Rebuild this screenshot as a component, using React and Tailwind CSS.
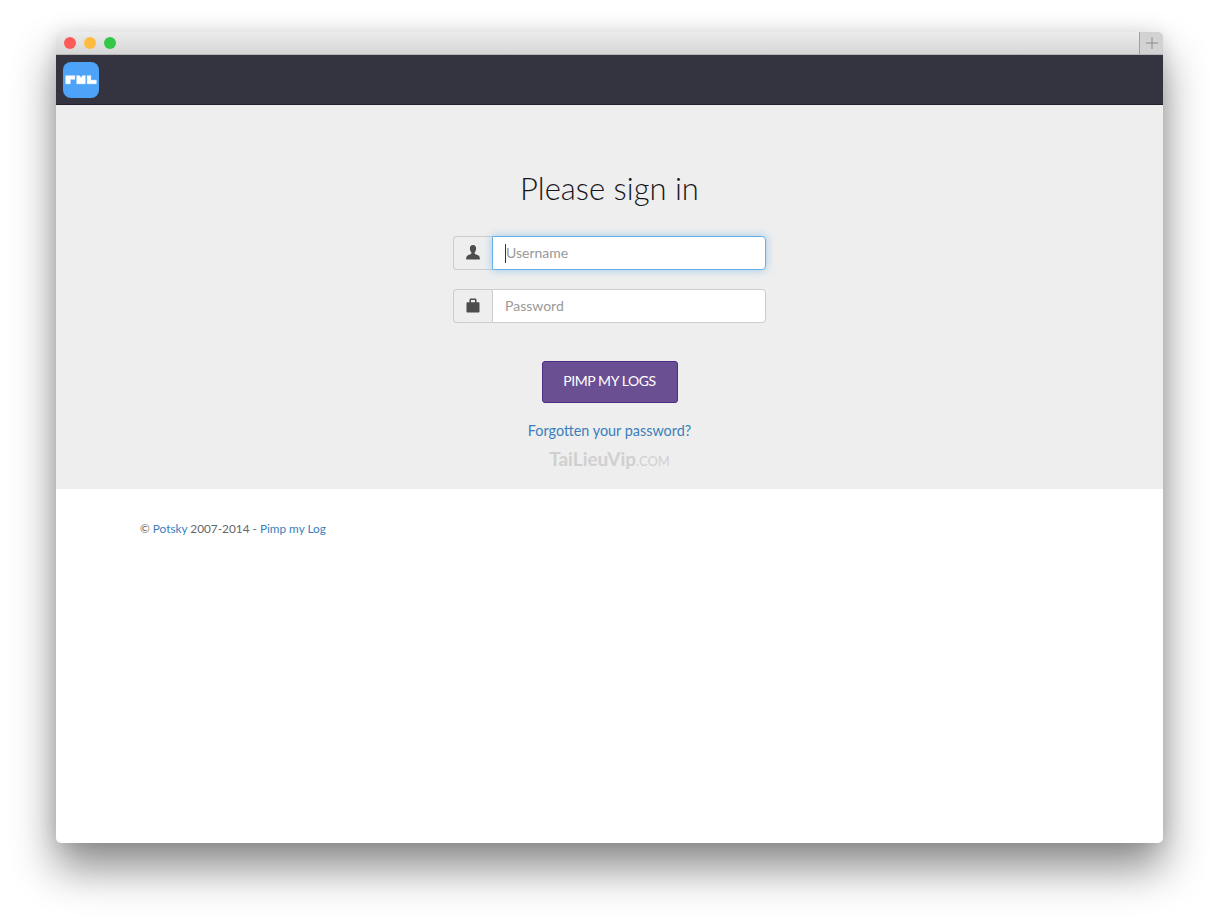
const UserIcon = () => (
  <svg width="14" height="15" viewBox="0 0 14 15" className="text-[#4d4d4d] -mt-[2px]">
    <path
      fill="currentColor"
      d="M7 0C4.900 0 3.900 1.500 3.900 3.400c0 1.400.5 2.800 1.300 3.700.3.400.3 1 .1 1.400-.3.500-1 .8-2.200 1.200C1.400 10.300.4 11 .2 13.100V14.500h13.600v-1.400c-.2-2.100-1.200-2.800-2.900-3.300-1.200-.4-1.900-.7-2.200-1.200-.2-.4-.2-1 .1-1.400.8-.9 1.300-2.300 1.300-3.700C10.100 1.500 9.100 0 7 0z"
    />
  </svg>
);

const LockIcon = () => (
  <svg width="14" height="15" viewBox="0 0 14 15" className="text-[#4d4d4d] -mt-[2px]">
    <path
      fill="currentColor"
      fillRule="evenodd"
      d="M3.500 4.300V2C3.500 1 4 .5 5 .5h4c1 0 1.500.5 1.500 1.500v2.300h1.800c.8 0 1.200.5 1.200 1.300v7.700c0 .8-.4 1.200-1.200 1.200H1.700c-.8 0-1.200-.4-1.200-1.200V5.600c0-.8.4-1.300 1.200-1.300h1.800zm1.500 0h4V2.400c0-.3-.1-.4-.4-.4H5.400c-.3 0-.4.1-.4.4v1.900z"
    />
  </svg>
);

const Logo = () => (
  <div className="w-9 h-9 rounded-lg bg-[#4da3f7] flex items-center justify-center">
    <svg width="32" height="11" viewBox="0 0 32 11">
      <g fill="#fff" stroke="#a9d3fb" strokeWidth="0.5">
        <path d="M.5 1.500h9.500v4H5.500v4.500H.5z" />
        <path d="M11.500 1.500h3l1.500 2 1.500-2h3V10h-9z" />
        <path d="M22 1.500h4v4.500h5.500v4H22z" />
      </g>
    </svg>
  </div>
);

const App = () => {
  return (
    <div className="min-h-[923px] bg-white pt-8 pl-14 font-['Lato',sans-serif] overflow-hidden">
      <div className="w-[1107px] h-[811px] rounded-[5px] bg-white shadow-[0_25px_44px_rgba(0,0,0,0.46),0_0_18px_rgba(0,0,0,0.1)] flex flex-col overflow-hidden">
        {/* Title bar */}
        <div className="h-[23px] shrink-0 flex justify-between bg-gradient-to-b from-[#ececec] to-[#d6d6d6] border-b border-b-[#b4b4b4]">
          <div className="flex items-center gap-2 pl-2">
            <span className="w-3 h-3 rounded-full bg-[#fc5b57]"></span>
            <span className="w-3 h-3 rounded-full bg-[#fdbc40]"></span>
            <span className="w-3 h-3 rounded-full bg-[#33c748]"></span>
          </div>
          <div className="w-6 flex items-center justify-center border-l border-[#a0a0a0] bg-[#d2d2d2]">
            <svg width="12" height="12" viewBox="0 0 12 12">
              <path stroke="#8c8c8c" strokeWidth="1" d="M6 0v12M0 6h12" />
            </svg>
          </div>
        </div>

        {/* Navbar */}
        <header className="h-[50px] shrink-0 flex items-center pl-[7px] bg-[#343340] border-b border-[#23222c]">
          <Logo />
        </header>

        {/* Sign in */}
        <main className="h-[384px] shrink-0 bg-[#eeeeee] flex flex-col items-center pt-[62px]">
          <h1 className="text-[31px] leading-[42px] font-light text-[#16161a]">Please sign in</h1>

          <div className="mt-[27px] flex flex-col gap-[19px] w-[313px] text-[14px]">
            <div className="flex h-[34px]">
              <span className="w-[39px] flex items-center justify-center rounded-l border border-r-0 border-[#cccccc] bg-[#eeeeee]">
                <UserIcon />
              </span>
              <div className="flex-1 flex items-center pl-3 bg-white rounded-r border border-[#66afe9] shadow-[0_0_8px_rgba(102,175,233,0.6)]">
                <span className="w-px h-[19px] bg-[#333333]"></span>
                <span className="text-[#999999] -mt-[2px]">Username</span>
              </div>
            </div>
            <div className="flex h-[34px]">
              <span className="w-[39px] flex items-center justify-center rounded-l border border-r-0 border-[#cccccc] bg-[#eeeeee]">
                <LockIcon />
              </span>
              <div className="flex-1 flex items-center pl-3 pb-px bg-white rounded-r border border-[#cccccc]">
                <span className="text-[#999999]">Password</span>
              </div>
            </div>
          </div>

          <button className="mt-[38px] w-[136px] h-[42px] pb-[4px] rounded-[3px] bg-[#6a5093] border border-[#4d2d84] text-white text-[14px] tracking-[-0.4px]">
            PIMP MY LOGS
          </button>

          <a className="mt-[18px] text-[#3a7fbb] text-[14.400px] leading-5">Forgotten your password?</a>

          <div className="mt-[8px] leading-5 font-bold text-[#d0d0d0] text-[19px]">
            TaiLieuVip<span className="font-normal text-[13px]">.COM</span>
          </div>
        </main>

        {/* Footer */}
        <footer className="pl-[84px] pt-[30px] text-[11.800px] leading-5 text-[#666666]">
          © <a className="text-[#3a7fbb]">Potsky</a> 2007-2014 - <a className="text-[#3a7fbb]">Pimp my Log</a>
        </footer>
      </div>
    </div>
  );
};

export default App;
